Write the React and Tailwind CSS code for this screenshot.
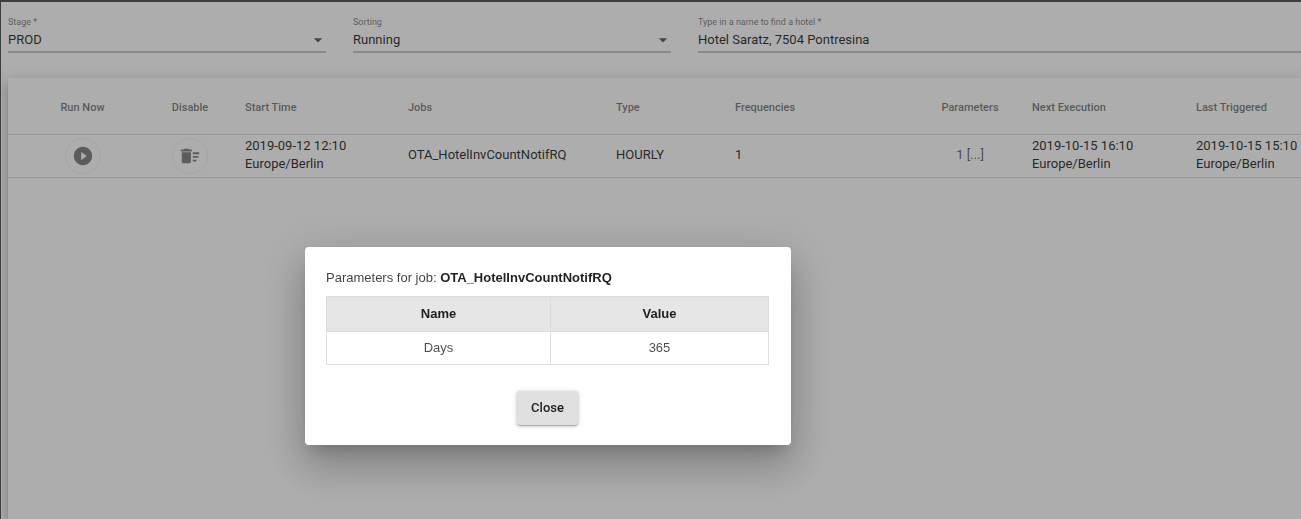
import { MdArrowDropDown, MdDeleteSweep, MdPlayCircleFilled } from "react-icons/md";

const headCell = "h-14 p-0 pt-1 text-[11px] font-medium text-black/50";
const bodyCell = "h-[43px] p-0 pb-px leading-[18px]";

function Label({ id, children }) {
  return (
    <label htmlFor={id} className="block text-[9px] leading-[12px] whitespace-nowrap text-black/50">
      {children}
    </label>
  );
}

function SelectField({ id, label, value }) {
  return (
    <div className="w-[318px] shrink-0 border-b-2 border-[#cbcbcb]">
      <Label id={id}>{label}</Label>
      <div className="grid items-center">
        <select
          id={id}
          defaultValue={value}
          className="col-start-1 row-start-1 h-[23px] w-full appearance-none bg-transparent text-[13px] text-black/80 outline-none"
        >
          <option>{value}</option>
        </select>
        <MdArrowDropDown className="pointer-events-none col-start-1 row-start-1 mr-[-2px] size-5 justify-self-end text-black/60" />
      </div>
    </div>
  );
}

function IconButton({ label, children }) {
  return (
    <button
      type="button"
      aria-label={label}
      className="mx-auto flex size-9 items-center justify-center rounded-full border border-black/5 text-[#888]"
    >
      {children}
    </button>
  );
}

function DateCell({ time, className = "" }) {
  return (
    <td className={`${bodyCell} whitespace-nowrap ${className}`}>
      {time}
      <br />
      Europe/Berlin
    </td>
  );
}

function JobsTable() {
  return (
    <table className="w-full table-fixed border-collapse text-left text-[13px] text-black/80">
      <colgroup>
        <col className="w-[149px]" />
        <col className="w-[66px]" />
        <col className="w-[185px]" />
        <col className="w-[208px]" />
        <col className="w-[119px]" />
        <col className="w-[173px]" />
        <col className="w-[124px]" />
        <col className="w-[164px]" />
        <col />
      </colgroup>
      <thead>
        <tr className="border-b border-black/12">
          <th className={`${headCell} text-center`}>Run Now</th>
          <th className={`${headCell} text-center`}>Disable</th>
          <th className={`${headCell} pl-[22px]`}>Start Time</th>
          <th className={headCell}>Jobs</th>
          <th className={headCell}>Type</th>
          <th className={headCell}>Frequencies</th>
          <th className={`${headCell} text-center`}>Parameters</th>
          <th className={headCell}>Next Execution</th>
          <th className={headCell}>Last Triggered</th>
        </tr>
      </thead>
      <tbody>
        <tr className="border-b border-black/12">
          <td className="p-0">
            <IconButton label="Run now">
              <MdPlayCircleFilled className="size-[22px]" />
            </IconButton>
          </td>
          <td className="p-0">
            <IconButton label="Disable">
              <MdDeleteSweep className="size-[22px]" />
            </IconButton>
          </td>
          <DateCell time="2019-09-12 12:10" className="pl-[22px]" />
          <td className={bodyCell}>OTA_HotelInvCountNotifRQ</td>
          <td className={bodyCell}>HOURLY</td>
          <td className={bodyCell}>1</td>
          <td className={`${bodyCell} text-center`}>
            <button type="button" className="text-black/60">1 [...]</button>
          </td>
          <DateCell time="2019-10-15 16:10" />
          <DateCell time="2019-10-15 15:10" />
        </tr>
      </tbody>
    </table>
  );
}

function ParametersDialog() {
  return (
    <div
      role="dialog"
      aria-modal="true"
      aria-labelledby="dialog-title"
      className="w-[486px] rounded-[4px] bg-white pt-[22px] pr-[22px] pb-5 pl-[21px] font-['Liberation_Sans',Arial,sans-serif] text-[13px] text-black/87 shadow-[0_11px_15px_-7px_rgba(0,0,0,0.2),0_24px_38px_3px_rgba(0,0,0,0.14),0_9px_46px_8px_rgba(0,0,0,0.12)]"
    >
      <h2 id="dialog-title" className="leading-[18px] text-black/75">
        Parameters for job: <b className="text-black/87">OTA_HotelInvCountNotifRQ</b>
      </h2>
      <table className="mt-[9px] w-full border-collapse text-center">
        <thead className="bg-[#e6e6e6]">
          <tr>
            <th className="h-[35px] w-[224px] border border-[#dcdcdc] p-0 font-bold">Name</th>
            <th className="h-[35px] border border-[#dcdcdc] p-0 font-bold">Value</th>
          </tr>
        </thead>
        <tbody className="text-black/70">
          <tr>
            <td className="h-[33px] border border-[#dfdfdf] p-0">Days</td>
            <td className="h-[33px] border border-[#dfdfdf] p-0">365</td>
          </tr>
        </tbody>
      </table>
      <div className="mt-[26px] flex justify-center">
        <button
          type="button"
          className="h-[34px] rounded-[3px] bg-[#e0e0e0] px-[14px] font-[Roboto,sans-serif] font-medium shadow-[0_1px_4px_rgba(0,0,0,0.26),0_1px_1px_rgba(0,0,0,0.2)]"
        >
          Close
        </button>
      </div>
    </div>
  );
}

export default function App() {
  return (
    <div className="relative flex min-h-screen flex-col overflow-hidden border-t-2 border-l border-[#5c5c5c] bg-white font-[Roboto,sans-serif]">
      <form className="flex gap-[27px] pt-[14px] pl-[7px]">
        <SelectField id="stage" label="Stage *" value="PROD" />
        <SelectField id="sorting" label="Sorting" value="Running" />
        <div className="min-w-0 flex-1 border-b-2 border-[#cbcbcb]">
          <Label id="hotel">Type in a name to find a hotel *</Label>
          <input
            id="hotel"
            defaultValue="Hotel Saratz, 7504 Pontresina"
            className="block h-[23px] w-full bg-transparent text-[13px] text-black/80 outline-none"
          />
        </div>
      </form>
      <main className="mt-[25px] ml-[7px] flex-1 bg-white shadow-[0_5px_5px_-3px_rgba(0,0,0,0.2),0_8px_10px_1px_rgba(0,0,0,0.14),0_3px_14px_2px_rgba(0,0,0,0.12)]">
        <JobsTable />
      </main>
      <div className="fixed inset-0 flex items-start bg-black/32 pt-[247px] pl-[305px]">
        <ParametersDialog />
      </div>
    </div>
  );
}
